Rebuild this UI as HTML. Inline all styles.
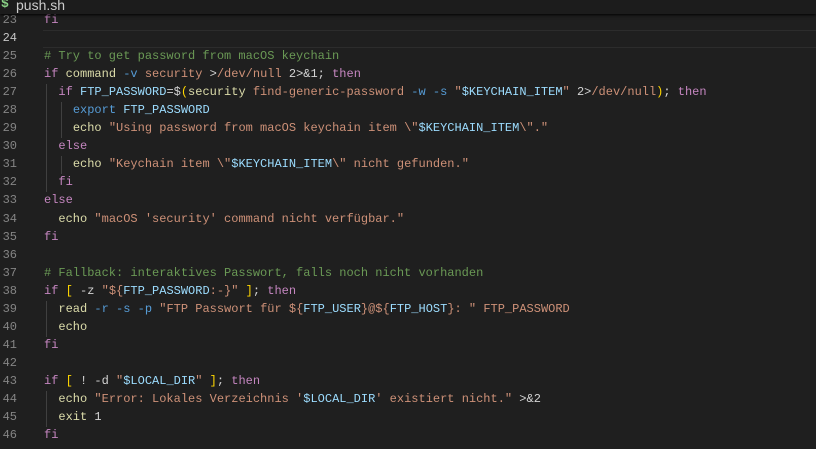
<!DOCTYPE html>
<html><head><style>
html,body{margin:0;padding:0;background:#1f1f1f;width:816px;height:449px;overflow:hidden}
.hdr{position:absolute;left:0;top:0;width:816px;height:14px;background:#1c1c1c;box-shadow:0 1px 3px #000;z-index:3;font:14px "Liberation Sans",sans-serif;color:#cccccc;overflow:hidden}
.hdr .d{position:absolute;left:1px;top:-4px;color:#89d185;font:bold 13px "Liberation Mono",monospace}
.hdr .n{position:absolute;left:16px;top:-3px}
.cur{position:absolute;left:43px;top:30px;width:773px;height:16px;border-top:1px solid #2c2c2c;border-bottom:1px solid #2c2c2c}
.code{position:absolute;left:0;top:11px;font:12px/18.05px "Liberation Mono",monospace;color:#d4d4d4;white-space:pre}
.ln{display:inline-block;width:17px;text-align:right;color:#858585;margin-right:27px}
.a{color:#c6c6c6}
.k{color:#c586c0}.c{color:#6a9955}.s{color:#ce9178}.v{color:#9cdcfe}.f{color:#dcdcaa}.o{color:#569cd6}.b{color:#ffd700}
.g{position:absolute;width:1px;background:#404040}
</style></head><body>
<div class="hdr"><span class="d">$</span><span class="n">push.sh</span></div>
<div class="cur"></div>
<div class="g" style="left:46px;top:84px;height:108px"></div>
<div class="g" style="left:61px;top:102px;height:36px"></div>
<div class="g" style="left:61px;top:156px;height:18px"></div>
<div class="g" style="left:46px;top:301px;height:36px"></div>
<div class="g" style="left:46px;top:391px;height:36px"></div>
<div class="code"><span class="ln">23</span><span class="k">fi</span>
<span class="ln a">24</span>
<span class="ln">25</span><span class="c"># Try to get password from macOS keychain</span>
<span class="ln">26</span><span class="k">if</span> <span class="f">command</span> <span class="o">-v</span> <span class="s">security</span> &gt;<span class="s">/dev/null</span> 2&gt;&amp;1; <span class="k">then</span>
<span class="ln">27</span>  <span class="k">if</span> <span class="v">FTP_PASSWORD</span>=$<span class="b">(</span><span class="f">security</span> <span class="s">find-generic-password</span> <span class="o">-w</span> <span class="o">-s</span> <span class="s">"</span><span class="v">$KEYCHAIN_ITEM</span><span class="s">"</span> 2&gt;<span class="s">/dev/null</span><span class="b">)</span>; <span class="k">then</span>
<span class="ln">28</span>    <span class="o">export</span> <span class="v">FTP_PASSWORD</span>
<span class="ln">29</span>    <span class="f">echo</span> <span class="s">"Using password from macOS keychain item \"</span><span class="v">$KEYCHAIN_ITEM</span><span class="s">\"."</span>
<span class="ln">30</span>  <span class="k">else</span>
<span class="ln">31</span>    <span class="f">echo</span> <span class="s">"Keychain item \"</span><span class="v">$KEYCHAIN_ITEM</span><span class="s">\" nicht gefunden."</span>
<span class="ln">32</span>  <span class="k">fi</span>
<span class="ln">33</span><span class="k">else</span>
<span class="ln">34</span>  <span class="f">echo</span> <span class="s">"macOS 'security' command nicht verfügbar."</span>
<span class="ln">35</span><span class="k">fi</span>
<span class="ln">36</span>
<span class="ln">37</span><span class="c"># Fallback: interaktives Passwort, falls noch nicht vorhanden</span>
<span class="ln">38</span><span class="k">if</span> <span class="b">[</span> -z <span class="s">"${</span><span class="v">FTP_PASSWORD</span><span class="s">:-}"</span> <span class="b">]</span>; <span class="k">then</span>
<span class="ln">39</span>  <span class="f">read</span> <span class="o">-r</span> <span class="o">-s</span> <span class="o">-p</span> <span class="s">"FTP Passwort für ${</span><span class="v">FTP_USER</span><span class="s">}@${</span><span class="v">FTP_HOST</span><span class="s">}: "</span> <span class="s">FTP_PASSWORD</span>
<span class="ln">40</span>  <span class="f">echo</span>
<span class="ln">41</span><span class="k">fi</span>
<span class="ln">42</span>
<span class="ln">43</span><span class="k">if</span> <span class="b">[</span> ! -d <span class="s">"</span><span class="v">$LOCAL_DIR</span><span class="s">"</span> <span class="b">]</span>; <span class="k">then</span>
<span class="ln">44</span>  <span class="f">echo</span> <span class="s">"Error: Lokales Verzeichnis '</span><span class="v">$LOCAL_DIR</span><span class="s">' existiert nicht."</span> &gt;&amp;2
<span class="ln">45</span>  <span class="f">exit</span> 1
<span class="ln">46</span><span class="k">fi</span></div>
</body></html>
